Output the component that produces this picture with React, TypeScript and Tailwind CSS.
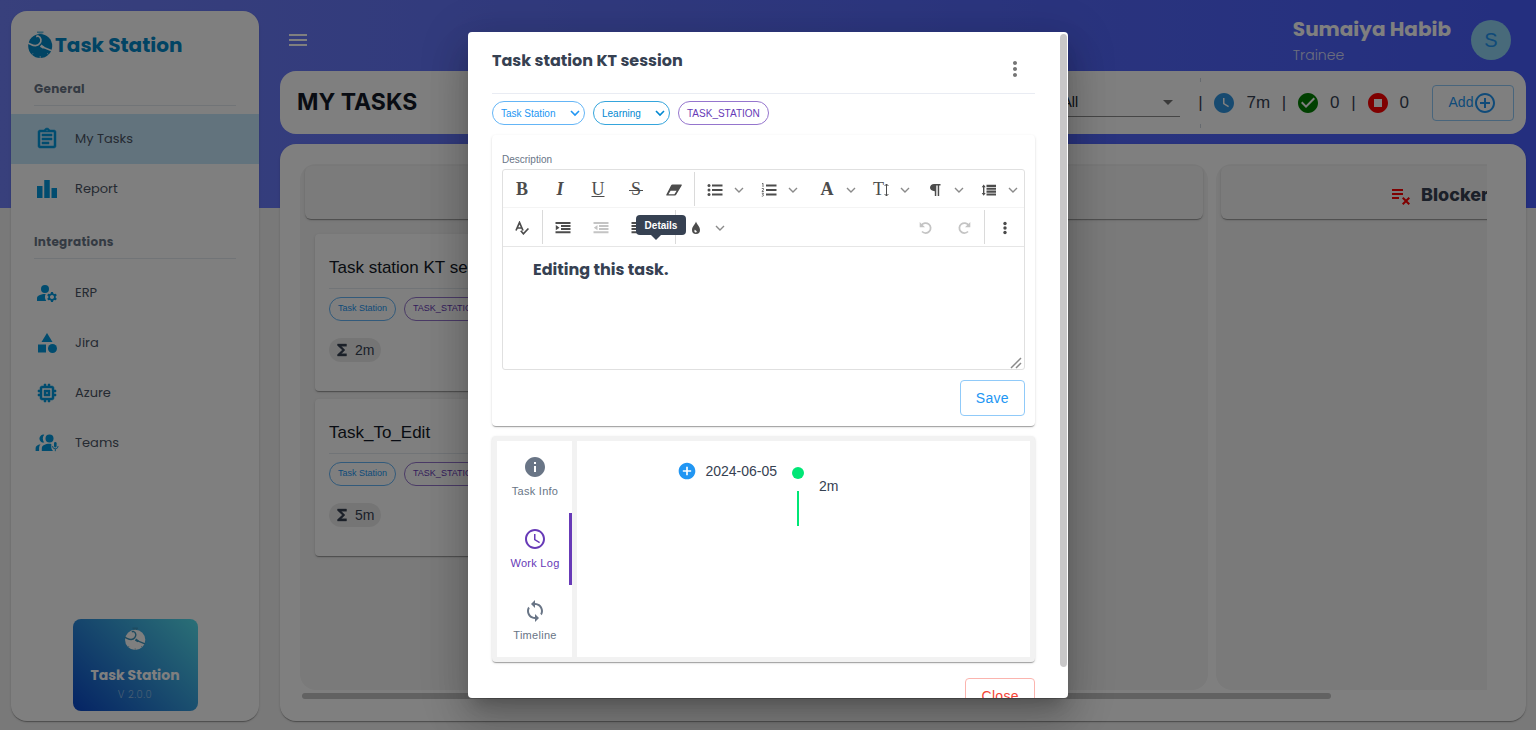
import type { ReactNode } from "react";
import {
  MdAccessTime,
  MdAddCircle,
  MdAddCircleOutline,
  MdArrowDropDown,
  MdCategory,
  MdCheckCircle,
  MdFunctions,
  MdInfo,
  MdLeaderboard,
  MdManageAccounts,
  MdMemory,
  MdMenu,
  MdMoreVert,
  MdOutlineAssignment,
  MdPlaylistRemove,
  MdStopCircle,
  MdSync,
  MdWatchLater,
} from "react-icons/md";

const BRAND = "font-['Poppins','Inter',sans-serif]";
const CARD_SHADOW =
  "shadow-[0_2px_1px_-1px_rgba(0,0,0,0.2),0_1px_1px_0_rgba(0,0,0,0.14),0_1px_3px_0_rgba(0,0,0,0.12)]";

function Logo({ className, cut, tab }: { className: string; cut: string; tab: string }) {
  return (
    <svg viewBox="0 0 26 28" className={className} fill="none" aria-hidden="true">
      <path d="M10 1.2h6.500" className={tab} strokeWidth="1.400" />
      <path d="M11.500 2.800h4" className={tab} strokeWidth="0.800" />
      <circle cx="13.200" cy="15" r="12" fill="currentColor" />
      <path
        d="M.8 12c2.700.8 4.700 2.800 7.700 2.600 3.400-.3 5.900-3.100 5.400-6.300-.3-1.600-1.300-2.800-2.900-3.300l-1.800.6"
        className={cut}
        strokeWidth="1.700"
      />
      <path d="M13.600 14.600l3.200 2.200" className={cut} strokeWidth="2.600" />
      <path d="M15.500 16l9.300 3.800" className={cut} strokeWidth="1.500" />
      <path d="M13.200 25v2M6 22.300l-1 1.300M20.400 22.300l1 1.300" className={cut} strokeWidth="0.700" />
    </svg>
  );
}

function TeamsIcon() {
  return (
    <svg viewBox="0 0 24 20" className="h-5 w-6" fill="currentColor" aria-hidden="true">
      <circle cx="14.500" cy="5.600" r="4" />
      <path d="M9.300 1.700a4 4 0 1 0 0 7.800 5.800 5.800 0 0 1 0-7.800z" />
      <path d="M6.800 18v-2.600c0-3 3.600-4.600 7.700-4.600.7 0 1.200 0 1.800.1v3.100c0 1.600.7 3 1.900 4z" />
      <path d="M.6 18v-2.800c0-2 1.800-3.300 5-3.900-1 1-1.500 2.300-1.500 4V18z" />
      <rect x="19" y="9" width="2.600" height="5.400" rx="1.300" />
      <path d="M17.500 13a2.800 2.800 0 0 0 5.600 0M20.300 15.800V18.200" fill="none" stroke="currentColor" strokeWidth="0.900" />
    </svg>
  );
}

function NavItem({ icon, label, active }: { icon: ReactNode; label: string; active?: boolean }) {
  return (
    <a
      href="#"
      className={`flex h-[50px] items-center gap-4 pl-6 text-[13px] text-[#4b5565] ${active ? "bg-[#c5e7fb]" : ""}`}
    >
      <span className="flex w-6 justify-center text-[#0299de]">{icon}</span>
      {label}
    </a>
  );
}

function NavHeading({ children }: { children: ReactNode }) {
  return (
    <h2 className="mx-[23px] border-b border-[#e3e8ef] pb-2 text-[12px] leading-4 font-bold tracking-wide text-[#697586]">
      {children}
    </h2>
  );
}

function Sidebar() {
  return (
    <aside className={`flex w-[248px] shrink-0 flex-col rounded-2xl bg-white ${BRAND} ${CARD_SHADOW}`}>
      <div className="flex items-center gap-0.5 pt-5 pl-4 text-[#0288c8]">
        <Logo className="h-7 w-[26px]" cut="stroke-white" tab="stroke-[#5cb9e0]" />
        <span className="text-[20px] leading-7 font-bold">Task Station</span>
      </div>
      <nav className="flex flex-col">
        <div className="pt-[22px] pb-2">
          <NavHeading>General</NavHeading>
        </div>
        <NavItem
          icon={<MdOutlineAssignment className="size-6 stroke-current stroke-[0.5] [&>path:first-child]:stroke-none" />}
          label="My Tasks"
          active
        />
        <NavItem icon={<MdLeaderboard className="size-6" />} label="Report" />
        <div className="pt-5 pb-[9px]">
          <NavHeading>Integrations</NavHeading>
        </div>
        <NavItem icon={<MdManageAccounts className="size-6" />} label="ERP" />
        <NavItem icon={<MdCategory className="size-6" />} label="Jira" />
        <NavItem
          icon={<MdMemory className="size-6 stroke-current stroke-[0.5] [&>path:first-child]:stroke-none" />}
          label="Azure"
        />
        <NavItem icon={<TeamsIcon />} label="Teams" />
      </nav>
      <div className="mx-auto mt-auto mb-2.5 flex w-[125px] flex-col items-center rounded-lg bg-linear-45/srgb from-[#0a47c9] to-[#56e0ee] pt-2 pb-2 text-white">
        <Logo className="h-6 w-[22px]" cut="stroke-[#3b94bd]" tab="stroke-[#3b94bd]" />
        <span className="mt-3 text-[14px] leading-6 font-bold">Task Station</span>
        <span className="text-[10px] leading-4 font-light tracking-wider text-[#8fbbe6]">V 2.0.0</span>
      </div>
    </aside>
  );
}

function Stat({ icon, value, divided }: { icon: ReactNode; value: string; divided?: boolean }) {
  return (
    <div className="flex items-center gap-2.5">
      <span className="flex h-[50px] w-1 flex-col items-center justify-between leading-5">
        <i className={`h-1 w-px ${divided ? "bg-[#cdd5df]" : ""}`} />
        <span>|</span>
        <i className={`h-1 w-px ${divided ? "bg-[#cdd5df]" : ""}`} />
      </span>
      {icon}
      <span>{value}</span>
    </div>
  );
}

function Toolbar() {
  return (
    <section className="flex h-[63px] items-center rounded-2xl bg-white pr-3 pl-[17px]">
      <h1 className="font-['Inter',sans-serif] text-[23px] font-bold text-[#121926]">MY TASKS</h1>
      <div className="ml-auto flex items-center">
        <div className="relative flex w-[126px] items-center border-b border-[#8c8c8c]">
          <select
            aria-label="Project"
            className="h-7 w-full appearance-none bg-transparent pl-2 text-[14px] text-[#121926]"
          >
            <option>All</option>
          </select>
          <MdArrowDropDown className="pointer-events-none absolute right-0 size-6 text-[#757575]" />
        </div>
        <div className="ml-[18px] flex gap-3 text-[17px] text-[#364152]">
          <Stat divided icon={<MdWatchLater className="size-6 text-[#2f95e0]" />} value="7m" />
          <Stat icon={<MdCheckCircle className="size-6 text-[#008000]" />} value="0" />
          <Stat icon={<MdStopCircle className="size-6 text-[#ff0000]" />} value="0" />
        </div>
        <button className="ml-[23px] flex h-9 w-[82px] items-center justify-center rounded border border-[#90caf9] text-[14px] text-[#2196f3]">
          Add
          <MdAddCircleOutline className="size-6" />
        </button>
      </div>
    </section>
  );
}

const chip = "flex h-6 items-center rounded-full border";

function TaskCard({ title, time }: { title: string; time: string }) {
  return (
    <article className={`flex h-[157px] flex-col items-start rounded bg-white px-3.5 ${CARD_SHADOW}`}>
      <h3 className="mb-2 w-full border-b border-[#e3e8ef] pt-[21px] pb-[7px] text-[17px] leading-[26px] text-[#121926]">
        {title}
      </h3>
      <div className="flex gap-2">
        <span className={`${chip} border-[#64b5f6] px-2 text-[9px] text-[#2196f3]`}>Task Station</span>
        <span className={`${chip} border-[#9575cd] px-2 text-[9px] text-[#673ab7]`}>TASK_STATION</span>
      </div>
      <span className="mt-[17px] flex h-6 items-center gap-1 rounded-full bg-[#ebebeb] pr-[7px] pl-1 text-[14px] text-[#364152]">
        <MdFunctions className="size-[18px] stroke-current stroke-[0.5] [&>path:first-child]:stroke-none" />
        {time}
      </span>
    </article>
  );
}

function Column({ heading, children }: { heading?: ReactNode; children?: ReactNode }) {
  return (
    <section className="flex w-[450px] shrink-0 flex-col rounded-2xl bg-[#f4f4f4] px-[5px] pt-0.5">
      <header
        className={`flex h-[53px] items-center justify-center gap-2 rounded-md bg-[#f6f6f6] pt-1 pl-1.5 font-['Inter',sans-serif] text-[18px] font-extrabold text-[#364152] ${CARD_SHADOW}`}
      >
        {heading}
      </header>
      <div className="flex flex-col gap-2 px-2.5 pt-[15px]">{children}</div>
    </section>
  );
}

function Board() {
  return (
    <section className={`flex min-h-0 flex-1 flex-col rounded-2xl bg-white pt-5 pr-[39px] pb-[22px] pl-5 ${CARD_SHADOW}`}>
      <div className="flex min-h-0 flex-1 gap-2 overflow-hidden">
        <Column>
          <TaskCard title="Task station KT session" time="2m" />
          <TaskCard title="Task_To_Edit" time="5m" />
        </Column>
        <Column />
        <Column
          heading={
            <>
              <MdPlaylistRemove className="size-6 text-[#ff0000]" />
              Blockers
            </>
          }
        />
      </div>
      <div className="mt-[3px] ml-0.5 h-1.5 w-13/15 rounded-full bg-[#c4c4c4]" />
    </section>
  );
}

function Chevron({ className }: { className: string }) {
  return (
    <svg viewBox="0 0 10 10" className={className} fill="none" stroke="currentColor" aria-hidden="true">
      <path d="M1 3l4 4 4-4" />
    </svg>
  );
}

function Tool({ label, menu, faded, children }: { label: string; menu?: boolean; faded?: boolean; children: ReactNode }) {
  return (
    <button
      aria-label={label}
      className={`flex h-[38px] shrink-0 items-center pt-0.5 font-['Liberation_Serif',serif] text-[18px] ${faded ? "text-[#c4c4c4]" : "text-[#4c4c4c]"} ${menu ? "w-[54px]" : "w-[38px]"}`}
    >
      <span className="flex w-[38px] justify-center">{children}</span>
      {menu && <Chevron className="size-2.5 stroke-[1.4] text-[#8a8a8a]" />}
    </button>
  );
}

function Glyph({ children }: { children: ReactNode }) {
  return (
    <svg viewBox="0 0 16 14" className="h-3.5 w-4" fill="currentColor" stroke="none" aria-hidden="true">
      {children}
    </svg>
  );
}

function Rule() {
  return <span className="mx-px h-[34px] w-px shrink-0 bg-[#dadada]" />;
}

function Editor() {
  return (
    <div className="rounded-[3px] border border-[#e0e0e0] text-[#4c4c4c]">
      <div className="flex h-[38px] items-center border-b border-[#f4f4f4]">
        <Tool label="Bold"><b>B</b></Tool>
        <Tool label="Italic"><b><i>I</i></b></Tool>
        <Tool label="Underline"><span className="underline">U</span></Tool>
        <Tool label="Strikethrough">
          <span className="relative">
            S
            <i className="absolute top-1/2 -left-0.5 h-px w-3.5 bg-current" />
          </span>
        </Tool>
        <Tool label="Clear formatting">
          <Glyph>
            <path fillRule="evenodd" d="M6.500 1.500h8.700c.5 0 .7.500.5 1L10.300 11.500c-.3.600-.8 1-1.400 1H.9c-.6 0-.8-.5-.5-1L5 2.500c.3-.6.9-1 1.500-1zM2.500 11.300h5.900l2.200-3.500H4.600z" />
          </Glyph>
        </Tool>
        <Rule />
        <Tool label="Bulleted list" menu>
          <Glyph>
            <circle cx="2" cy="2.500" r="1.500" /><circle cx="2" cy="7" r="1.500" /><circle cx="2" cy="11.500" r="1.500" />
            <path d="M5 1.500h10.500v2H5zM5 6h10.500v2H5zM5 10.500h10.500v2H5z" />
          </Glyph>
        </Tool>
        <Tool label="Numbered list" menu>
          <Glyph>
            <path d="M5 1.500h10.500v2H5zM5 6h10.500v2H5zM5 10.500h10.500v2H5z" />
            <path
              d="M1 .8l1-.5v3.700M.8 5.500h1.700v1L1 8.500h1.800M.8 10.200h1.700l-.9 1.200c1.500 0 1.300 2-.8 1.800"
              fill="none"
              stroke="currentColor"
              strokeWidth="0.8"
            />
          </Glyph>
        </Tool>
        <span className="w-1" />
        <Tool label="Font" menu><b>A</b></Tool>
        <Tool label="Font size" menu>
          <span className="flex items-center">
            T
            <svg viewBox="0 0 5 14" className="h-3.5 w-[5px]" fill="none" stroke="currentColor" aria-hidden="true">
              <path d="M2.500 1v12M.6 3l1.900-2 1.900 2M.6 11l1.900 2 1.900-2" />
            </svg>
          </span>
        </Tool>
        <Tool label="Paragraph" menu>
          <Glyph>
            <path d="M7 1h6.500v1.500h-1.300V13h-1.500V2.500H9.300V13H7.800V8.200C4.800 8.200 3 6.700 3 4.600S4.800 1 7 1z" />
          </Glyph>
        </Tool>
        <Tool label="Line height" menu>
          <Glyph>
            <path d="M5.500 1.800H15v2.100H5.500zM5.500 4.700h9.500v2.100H5.500zM5.500 7.600H15v2.100H5.500zM5.500 10.500H15v2.100H5.500z" />
            <path d="M2.700 1.500l2 2.700H3.400v5.800h1.300l-2 2.700-2-2.700H2V4.200H.7z" />
          </Glyph>
        </Tool>
      </div>
      <div className="flex h-[39px] items-center border-b border-[#e6e6e6]">
        <Tool label="Spellcheck">
          <Glyph>
            <path
              d="M2 9.500L5.500 1.500 9 9.500M3.200 7h4.600M6.800 9.800l2.600 3 5-5.300"
              fill="none"
              stroke="currentColor"
              strokeWidth="1.700"
            />
          </Glyph>
        </Tool>
        <Rule />
        <Tool label="Indent">
          <Glyph>
            <path d="M.5 1h15v2H.5zM6 4h9.500v2H6zM6 7h9.500v2H6zM.5 10.200h15v2H.5zM.8 4l3.700 2.700L.8 9.300z" />
          </Glyph>
        </Tool>
        <Tool label="Outdent" faded>
          <Glyph>
            <path d="M.5 1h15v2H.5zM6 4h9.500v2H6zM6 7h9.500v2H6zM.5 10.200h15v2H.5zM4.500 4L.8 6.700l3.700 2.600z" />
          </Glyph>
        </Tool>
        <div className="relative">
          <Tool label="Align" menu>
            <Glyph>
              <path d="M.5 1h15v2H.5zM.5 4h15v2H.5zM.5 7h15v2H.5zM.5 10.200h15v2H.5z" />
            </Glyph>
          </Tool>
          <div
            role="tooltip"
            className="absolute top-[7px] left-4 flex h-5 w-[50px] items-center justify-center rounded bg-[#364152] text-[10px] font-bold text-white"
          >
            Details
            <svg viewBox="0 0 10 5" className="absolute top-5 left-[15px] h-[5px] w-2.5 fill-[#364152]" aria-hidden="true">
              <path d="M0 0h10L5 5z" />
            </svg>
          </div>
        </div>
        <Rule />
        <Tool label="Text color" menu>
          <Glyph>
            <path fillRule="evenodd" d="M8 .5c.7 2.800 4 5 4 8.500a4 4 0 0 1-8 0C4 5.500 7.300 3.300 8 .5zM6.900 8.500c-.9 1.300-.7 3 1 3 1 0 1.200-1.200.3-1.700-.7-.4-1-.8-1.300-1.300z" />
          </Glyph>
        </Tool>
        <span className="flex-1" />
        <Tool label="Undo" faded>
          <Glyph>
            <path d="M3.500 4.200A5 5 0 1 1 4 10.500" fill="none" stroke="currentColor" strokeWidth="1.800" />
            <path d="M1.700 1v5.300H7z" />
          </Glyph>
        </Tool>
        <Tool label="Redo" faded>
          <Glyph>
            <path d="M12.500 4.200A5 5 0 1 0 12 10.500" fill="none" stroke="currentColor" strokeWidth="1.800" />
            <path d="M14.300 1v5.300H9z" />
          </Glyph>
        </Tool>
        <Rule />
        <Tool label="More">
          <Glyph>
            <circle cx="8" cy="2.500" r="1.700" /><circle cx="8" cy="7" r="1.700" /><circle cx="8" cy="11.500" r="1.700" />
          </Glyph>
        </Tool>
      </div>
      <div className={`relative h-[122px] px-[30px] pt-[11px] text-[16px] leading-6 font-bold text-[#364152] ${BRAND}`}>
        <p>Editing this task.</p>
        <svg viewBox="0 0 12 12" className="absolute right-0.5 bottom-0 size-3 stroke-[#8a8a8a]" fill="none" aria-hidden="true">
          <path d="M1 11L11 1M6 11l5-5" strokeWidth="1.500" />
        </svg>
      </div>
    </div>
  );
}

function DetailTab({ icon, label, selected }: { icon: ReactNode; label: string; selected?: boolean }) {
  return (
    <button
      role="tab"
      aria-selected={!!selected}
      className={`flex h-[72px] flex-col items-center justify-center gap-1 border-r-[3px] pl-1 text-[11px] leading-4 tracking-wide ${selected ? "border-[#673ab7] text-[#673ab7]" : "border-transparent text-[#697586]"}`}
    >
      {icon}
      {label}
    </button>
  );
}

function ChipSelect({ value, className }: { value: string; className: string }) {
  return (
    <div className={`relative ${chip} ${className}`}>
      <select aria-label={value} className="h-full w-full appearance-none bg-transparent pl-2 text-[10px]">
        <option>{value}</option>
      </select>
      <Chevron className="pointer-events-none absolute right-1 size-2.5 stroke-[1.6]" />
    </div>
  );
}

function TaskDialog() {
  return (
    <div
      role="dialog"
      aria-label="Task station KT session"
      className="relative flex h-full w-[600px] flex-col overflow-hidden rounded bg-white pr-[33px] pl-6 shadow-[0_11px_15px_-7px_rgba(0,0,0,0.2),0_24px_38px_3px_rgba(0,0,0,0.14),0_9px_46px_8px_rgba(0,0,0,0.12)]"
    >
      <header className="flex shrink-0 items-start justify-between border-b border-[#e9ecf3] pt-[17px] pb-2">
        <h2 className={`text-[16px] leading-6 font-bold text-[#364152] ${BRAND}`}>Task station KT session</h2>
        <button aria-label="Task options" className="mt-1 mr-1 flex size-8 items-center justify-center text-[#757575]">
          <MdMoreVert className="size-6" />
        </button>
      </header>
      <div className="flex shrink-0 gap-2 pt-[7px] pb-2.5">
        <ChipSelect value="Task Station" className="w-[93px] border-[#64b5f6] text-[#2196f3]" />
        <ChipSelect value="Learning" className="w-[77px] border-[#35a5dc] text-[#0288d1]" />
        <span className={`${chip} border-[#9575cd] px-2 text-[10px] text-[#673ab7]`}>TASK_STATION</span>
      </div>
      <section className={`flex shrink-0 flex-col rounded px-2.5 pt-[18px] pb-2.5 ${CARD_SHADOW}`}>
        <span className="mb-0.5 text-[10px] leading-[14px] text-[#697586]">Description</span>
        <Editor />
        <button className="mt-2.5 h-9 self-end rounded border border-[#90caf9] px-[15px] text-[14px] tracking-wide text-[#2196f3]">
          Save
        </button>
      </section>
      <section className={`mt-2.5 flex shrink-0 gap-[5px] rounded bg-[#f2f2f2] p-[5px] ${CARD_SHADOW}`}>
        <div role="tablist" className="flex w-[75px] flex-col bg-white">
          <DetailTab icon={<MdInfo className="size-6" />} label="Task Info" />
          <DetailTab selected icon={<MdAccessTime className="size-6" />} label="Work Log" />
          <DetailTab icon={<MdSync className="size-6" />} label="Timeline" />
        </div>
        <div className="flex flex-1 items-start bg-white pt-5 text-[14px] leading-5 text-[#364152]">
          <div className="flex w-[200px] items-center justify-end gap-2">
            <MdAddCircle className="size-5 text-[#2196f3]" />
            2024-06-05
          </div>
          <div className="mx-[15px] flex flex-col items-center gap-3 pt-1.5">
            <span className="size-3 rounded-full bg-[#00e676]" />
            <span className="h-[35px] w-0.5 bg-[#00e676]" />
          </div>
          <span className="pt-[15px]">2m</span>
        </div>
      </section>
      <button className="mt-4 h-9 shrink-0 self-end rounded border border-[#fbb4ae] px-[15px] text-[14px] tracking-wide text-[#f44336]">
        Close
      </button>
      <div className="absolute top-0.5 right-0 h-[95%] w-2 rounded-full border-r border-white bg-[#c8c7c8]" />
    </div>
  );
}

export default function App() {
  return (
    <div className="relative h-screen overflow-hidden bg-[#f3f3f3] font-['Liberation_Sans',Arial,sans-serif]">
      <div className="absolute inset-x-0 top-0 h-52 bg-linear-to-r/srgb from-[#7080f8] to-[#485eff]" />
      <div className="relative flex h-full gap-[21px] pt-[11px] pr-2.5 pb-[9px] pl-[11px]">
        <Sidebar />
        <main className="flex min-w-0 flex-1 flex-col gap-2.5">
          <header className={`flex h-[50px] items-center gap-5 pr-[15px] pl-1.5 text-white ${BRAND}`}>
            <button aria-label="Toggle menu" className="mt-2">
              <MdMenu className="size-6" />
            </button>
            <div className="ml-auto pt-2.5">
              <p className="text-[20px] leading-7 font-bold">Sumaiya Habib</p>
              <p className="text-[14px] leading-6 font-light text-[#d8dcfa]">Trainee</p>
            </div>
            <span className="mt-2 flex size-10 items-center justify-center rounded-full bg-[#90d5f5] font-['Liberation_Sans',sans-serif] text-[20px] text-[#2196f3]">
              S
            </span>
          </header>
          <Toolbar />
          <Board />
        </main>
      </div>
      <div className="absolute inset-0 flex justify-center bg-black/50 py-8">
        <TaskDialog />
      </div>
    </div>
  );
}
